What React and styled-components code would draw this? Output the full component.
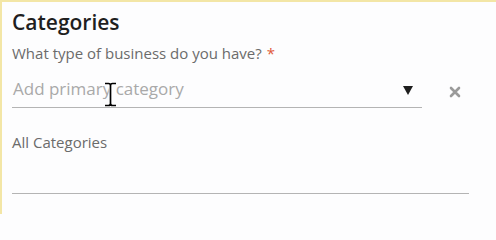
import React from 'react';
import styled, {createGlobalStyle} from 'styled-components';

const GlobalStyle = createGlobalStyle`
  html, body {
    margin: 0;
    padding: 0;
    background: #fdfdfe;
  }
  body {
    font-family: "Open Sans", "Noto Sans", sans-serif;
  }
`;

const Panel = styled.div`
  box-sizing: border-box;
  width: 496px;
  height: 214px;
  border-top: 2px solid #f3e6a6;
  border-left: 2px solid #f3e6a6;
  background: #fdfdfe;
  padding: 6px 28px 0 10px;
  position: relative;
  overflow: hidden;
`;

const Title = styled.h2`
  margin: 0;
  font-size: 21px;
  line-height: 28px;
  font-weight: 600;
  color: #1f1f1f;
`;

const Label = styled.div`
  font-size: 15px;
  line-height: 20px;
  color: #6b6b6b;
  margin-top: ${p => p.$top || 0}px;
`;

const Required = styled.span`
  color: #e0583a;
  margin-left: 5px;
`;

const Row = styled.div`
  display: flex;
  align-items: center;
  margin-top: 9px;
`;

const SelectBox = styled.div`
  flex: 0 0 410px;
  display: flex;
  align-items: center;
  justify-content: space-between;
  height: 36px;
  box-sizing: border-box;
  border-bottom: 1px solid #b4b4b4;
  padding: 0 9px 3px 1px;
`;

const Placeholder = styled.span`
  font-size: 17px;
  color: #a9a9a9;
`;

const Caret = styled.span`
  width: 0;
  height: 0;
  border-left: 5px solid transparent;
  border-right: 5px solid transparent;
  border-top: 9px solid #1e1e1e;
  margin-top: 4px;
`;

const ClearButton = styled.button`
  border: 0;
  background: none;
  padding: 0;
  margin-left: 27px;
  margin-top: 4px;
  display: flex;
  cursor: pointer;
`;

const Underline = styled.div`
  width: 457px;
  height: 1px;
  background: #b4b4b4;
  margin-top: ${p => p.$top}px;
`;

const Cursor = styled.svg`
  position: absolute;
  left: 101px;
  top: 80px;
`;

const beam =
  'M2 1.5 H5.5 Q7.5 1.5 7.5 3.5 V21.5 Q7.5 23.5 5.5 23.5 H2 M13 1.5 H9.5 Q7.5 1.5 7.5 3.5 M7.5 21.5 Q7.5 23.5 9.5 23.5 H13';

export default function App() {
  return (
    <>
      <GlobalStyle />
      <Panel>
        <Title>Categories</Title>
        <Label $top={7}>
          What type of business do you have?<Required>*</Required>
        </Label>
        <Row>
          <SelectBox>
            <Placeholder>Add primary category</Placeholder>
            <Caret />
          </SelectBox>
          <ClearButton aria-label="clear">
            <svg width="12" height="12" viewBox="0 0 12 12">
              <path d="M2 2 L10 10 M10 2 L2 10" stroke="#9a9a9a" strokeWidth="2.6" strokeLinecap="round" />
            </svg>
          </ClearButton>
        </Row>
        <Label $top={24}>All Categories</Label>
        <Underline $top={41} />
        <Cursor width="15" height="25" viewBox="0 0 15 25">
          <path d={beam} fill="none" stroke="#fff" strokeWidth="3.5" />
          <path d={beam} fill="none" stroke="#000" strokeWidth="1.7" />
        </Cursor>
      </Panel>
    </>
  );
}
